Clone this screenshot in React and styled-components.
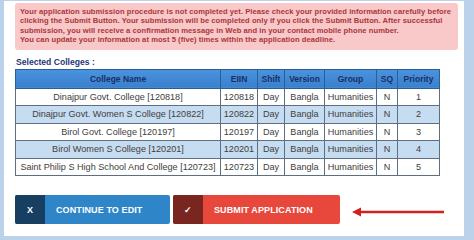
import React from "react";
import styled, { createGlobalStyle } from "styled-components";

const GlobalStyle = createGlobalStyle`
  html, body {
    margin: 0;
    padding: 0;
    background: #bcd2ea;
  }
  body {
    font-family: "Liberation Sans", Arial, sans-serif;
  }
`;

const colleges = [
  { name: "Dinajpur Govt. College [120818]", eiin: "120818", priority: 1 },
  { name: "Dinajpur Govt. Women S College [120822]", eiin: "120822", priority: 2 },
  { name: "Birol Govt. College [120197]", eiin: "120197", priority: 3 },
  { name: "Birol Women S College [120201]", eiin: "120201", priority: 4 },
  { name: "Saint Philip S High School And College [120723]", eiin: "120723", priority: 5 },
];

export default function App() {
  return (
    <>
      <GlobalStyle />
      <Panel>
        <Alert>
          Your application submission procedure is not completed yet. Please check your provided information carefully before
          clicking the Submit Button. Your submission will be completed only if you click the Submit Button. After successful
          submission, you will receive a confirmation message in Web and in your contact mobile phone number.
          <br />
          You can update your information at most 5 (five) times within the application deadline.
        </Alert>
        <Heading>Selected Colleges :</Heading>
        <Table>
          <colgroup>
            <col style={{ width: 205 }} />
            <col style={{ width: 37 }} />
            <col style={{ width: 27 }} />
            <col style={{ width: 40 }} />
            <col style={{ width: 52 }} />
            <col style={{ width: 21 }} />
            <col style={{ width: 42 }} />
          </colgroup>
          <thead>
            <tr>
              <Th>College Name</Th>
              <Th>EIIN</Th>
              <Th>Shift</Th>
              <Th>Version</Th>
              <Th>Group</Th>
              <Th>SQ</Th>
              <Th>Priority</Th>
            </tr>
          </thead>
          <tbody>
            {colleges.map((c, i) => (
              <Row key={c.eiin} $shaded={i % 2 === 1}>
                <Td>{c.name}</Td>
                <Td>{c.eiin}</Td>
                <Td>Day</Td>
                <Td>Bangla</Td>
                <Td>Humanities</Td>
                <Td>N</Td>
                <Td>{c.priority}</Td>
              </Row>
            ))}
          </tbody>
        </Table>
        <Actions>
          <Button $tone="#2e86c8" $dark="#173f61" $width={155}>
            <ButtonIcon>X</ButtonIcon>
            <ButtonLabel>CONTINUE TO EDIT</ButtonLabel>
          </Button>
          <Button $tone="#e8483c" $dark="#7a2620" $width={167}>
            <ButtonIcon>✓</ButtonIcon>
            <ButtonLabel>SUBMIT APPLICATION</ButtonLabel>
          </Button>
          <Arrow width="93" height="10" viewBox="0 0 93 10">
            <line x1="6" y1="5" x2="92" y2="5" stroke="#d21f1f" strokeWidth="2.4" />
            <polygon points="0,5 9,0.5 9,9.5" fill="#d21f1f" />
          </Arrow>
        </Actions>
      </Panel>
    </>
  );
}

const Panel = styled.div`
  background: #fff;
  margin: 1px 10px 0 4px;
  height: 235px;
  box-sizing: border-box;
  padding: 2px 6px 0 11px;
`;

const Alert = styled.div`
  background: #f9c8c9;
  color: #a8373a;
  font-weight: bold;
  font-size: 7.6px;
  line-height: 9.4px;
  padding: 4px 4px 5px 5px;
  border-radius: 3px;
  letter-spacing: 0.05px;
`;

const Heading = styled.div`
  color: #1f3678;
  font-weight: bold;
  font-size: 8.6px;
  margin: 7px 0 0 1px;
  line-height: 10px;
`;

const Table = styled.table`
  margin-top: 2px;
  width: 424px;
  border-collapse: collapse;
  table-layout: fixed;
  font-size: 9.1px;
`;

const Th = styled.th`
  background: linear-gradient(#4a93de, #3a80cc);
  color: #1a2f66;
  font-weight: bold;
  font-size: 8.5px;
  height: 18px;
  padding: 0;
  border: 1px solid #2b5f93;
  text-align: center;
  white-space: nowrap;
`;

const Row = styled.tr`
  background: ${(p) => (p.$shaded ? "#c6dcf1" : "#fff")};
`;

const Td = styled.td`
  height: 16.5px;
  padding: 0;
  color: #404040;
  text-align: center;
  white-space: nowrap;
  overflow: hidden;
  border: 1px solid #5e6e80;
`;

const Actions = styled.div`
  display: flex;
  align-items: center;
  gap: 3px;
  margin-top: 19px;
`;

const Button = styled.div`
  display: flex;
  width: ${(p) => p.$width}px;
  height: 29px;
  background: ${(p) => p.$tone};
  border-radius: 2px;
  overflow: hidden;
  color: #fff;
  font-weight: bold;
  font-size: 9px;

  & > span:first-child {
    background: ${(p) => p.$dark};
  }
`;

const ButtonIcon = styled.span`
  width: 30px;
  display: flex;
  align-items: center;
  justify-content: center;
`;

const ButtonLabel = styled.span`
  display: flex;
  align-items: center;
  padding-left: 11px;
  letter-spacing: 0.1px;
`;

const Arrow = styled.svg`
  margin-left: 9px;
  margin-top: 5px;
`;
